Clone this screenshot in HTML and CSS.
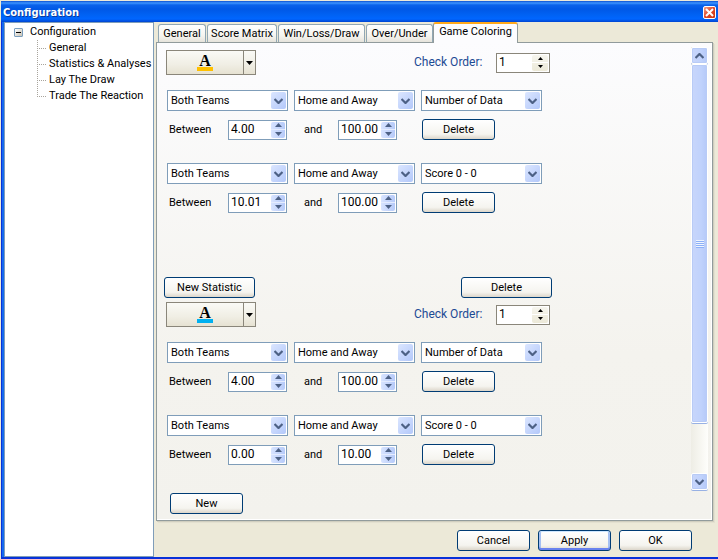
FILE: index.html
```html
<!DOCTYPE html>
<html lang="en">
<head>
<meta charset="utf-8">
<title>Configuration</title>
<link rel="stylesheet" href="styles.css">
</head>
<body>
<svg class="defs" aria-hidden="true">
  <symbol id="chev-down" viewBox="0 0 9 6"><path d="M0.5 1 L4.5 5 L8.5 1" fill="none" stroke="#4d6185" stroke-width="2.2"/></symbol>
  <symbol id="chev-up" viewBox="0 0 9 6"><path d="M0.5 5 L4.5 1 L8.5 5" fill="none" stroke="#4d6185" stroke-width="2.2"/></symbol>
  <symbol id="tri-up" viewBox="0 0 7 4"><path d="M0 4 L3.5 0 L7 4Z" fill="currentColor"/></symbol>
  <symbol id="tri-down" viewBox="0 0 7 4"><path d="M0 0 L3.5 4 L7 0Z" fill="currentColor"/></symbol>
</svg>
<div class="window">
  <header class="titlebar">
    <h1>Configuration</h1>
    <button class="close" aria-label="Close"><svg viewBox="0 0 9 9"><path d="M1 1 L8 8 M8 1 L1 8" stroke="#fff" stroke-width="2"/></svg></button>
  </header>
  <div class="body">
    <nav class="tree">
      <div class="root"><button class="toggle" aria-label="Collapse"></button><a href="#">Configuration</a></div>
      <ul>
        <li><a href="#">General</a></li>
        <li><a href="#">Statistics &amp; Analyses</a></li>
        <li><a href="#">Lay The Draw</a></li>
        <li><a href="#">Trade The Reaction</a></li>
      </ul>
    </nav>
    <main class="main">
      <div class="tabs" role="tablist">
        <button class="tab tab-general" role="tab">General</button>
        <button class="tab tab-matrix" role="tab">Score Matrix</button>
        <button class="tab tab-wld" role="tab">Win/Loss/Draw</button>
        <button class="tab tab-ou" role="tab">Over/Under</button>
        <button class="tab active" role="tab" aria-selected="true">Game Coloring</button>
      </div>
      <section class="panel">
        <div class="content">
          <div class="group">
            <div class="head">
              <div class="color amber"><button class="swatch" aria-label="Color"><b>A</b><i></i></button><button class="drop" aria-label="Choose color"><svg><use href="#tri-down"/></svg></button></div>
              <label class="order" for="o1">Check Order:</label>
              <span class="spin plain"><input id="o1" value="1"><span class="arrows"><button aria-label="Up"><svg><use href="#tri-up"/></svg></button><button aria-label="Down"><svg><use href="#tri-down"/></svg></button></span></span>
            </div>
            <div class="stat">
              <div class="combos">
                <span class="combo"><select aria-label="Team"><option>Both Teams</option></select><span><svg><use href="#chev-down"/></svg></span></span>
                <span class="combo"><select aria-label="Venue"><option>Home and Away</option></select><span><svg><use href="#chev-down"/></svg></span></span>
                <span class="combo"><select aria-label="Statistic"><option>Number of Data</option></select><span><svg><use href="#chev-down"/></svg></span></span>
              </div>
              <div class="range">
                <label for="a1">Between</label>
                <span class="spin"><input id="a1" value="4.00"><span class="arrows"><button aria-label="Up"><svg><use href="#tri-up"/></svg></button><button aria-label="Down"><svg><use href="#tri-down"/></svg></button></span></span>
                <label class="and" for="b1">and</label>
                <span class="spin"><input id="b1" value="100.00"><span class="arrows"><button aria-label="Up"><svg><use href="#tri-up"/></svg></button><button aria-label="Down"><svg><use href="#tri-down"/></svg></button></span></span>
                <button class="btn">Delete</button>
              </div>
            </div>
            <div class="stat">
              <div class="combos">
                <span class="combo"><select aria-label="Team"><option>Both Teams</option></select><span><svg><use href="#chev-down"/></svg></span></span>
                <span class="combo"><select aria-label="Venue"><option>Home and Away</option></select><span><svg><use href="#chev-down"/></svg></span></span>
                <span class="combo"><select aria-label="Statistic"><option>Score 0 - 0</option></select><span><svg><use href="#chev-down"/></svg></span></span>
              </div>
              <div class="range">
                <label for="a2">Between</label>
                <span class="spin"><input id="a2" value="10.01"><span class="arrows"><button aria-label="Up"><svg><use href="#tri-up"/></svg></button><button aria-label="Down"><svg><use href="#tri-down"/></svg></button></span></span>
                <label class="and" for="b2">and</label>
                <span class="spin"><input id="b2" value="100.00"><span class="arrows"><button aria-label="Up"><svg><use href="#tri-up"/></svg></button><button aria-label="Down"><svg><use href="#tri-down"/></svg></button></span></span>
                <button class="btn">Delete</button>
              </div>
            </div>
            <div class="group-actions"><button class="btn wide">New Statistic</button><button class="btn wide">Delete</button></div>
          </div>
          <div class="group">
            <div class="head">
              <div class="color sky"><button class="swatch" aria-label="Color"><b>A</b><i></i></button><button class="drop" aria-label="Choose color"><svg><use href="#tri-down"/></svg></button></div>
              <label class="order" for="o2">Check Order:</label>
              <span class="spin plain"><input id="o2" value="1"><span class="arrows"><button aria-label="Up"><svg><use href="#tri-up"/></svg></button><button aria-label="Down"><svg><use href="#tri-down"/></svg></button></span></span>
            </div>
            <div class="stat">
              <div class="combos">
                <span class="combo"><select aria-label="Team"><option>Both Teams</option></select><span><svg><use href="#chev-down"/></svg></span></span>
                <span class="combo"><select aria-label="Venue"><option>Home and Away</option></select><span><svg><use href="#chev-down"/></svg></span></span>
                <span class="combo"><select aria-label="Statistic"><option>Number of Data</option></select><span><svg><use href="#chev-down"/></svg></span></span>
              </div>
              <div class="range">
                <label for="a3">Between</label>
                <span class="spin"><input id="a3" value="4.00"><span class="arrows"><button aria-label="Up"><svg><use href="#tri-up"/></svg></button><button aria-label="Down"><svg><use href="#tri-down"/></svg></button></span></span>
                <label class="and" for="b3">and</label>
                <span class="spin"><input id="b3" value="100.00"><span class="arrows"><button aria-label="Up"><svg><use href="#tri-up"/></svg></button><button aria-label="Down"><svg><use href="#tri-down"/></svg></button></span></span>
                <button class="btn">Delete</button>
              </div>
            </div>
            <div class="stat">
              <div class="combos">
                <span class="combo"><select aria-label="Team"><option>Both Teams</option></select><span><svg><use href="#chev-down"/></svg></span></span>
                <span class="combo"><select aria-label="Venue"><option>Home and Away</option></select><span><svg><use href="#chev-down"/></svg></span></span>
                <span class="combo"><select aria-label="Statistic"><option>Score 0 - 0</option></select><span><svg><use href="#chev-down"/></svg></span></span>
              </div>
              <div class="range">
                <label for="a4">Between</label>
                <span class="spin"><input id="a4" value="0.00"><span class="arrows"><button aria-label="Up"><svg><use href="#tri-up"/></svg></button><button aria-label="Down"><svg><use href="#tri-down"/></svg></button></span></span>
                <label class="and" for="b4">and</label>
                <span class="spin"><input id="b4" value="10.00"><span class="arrows"><button aria-label="Up"><svg><use href="#tri-up"/></svg></button><button aria-label="Down"><svg><use href="#tri-down"/></svg></button></span></span>
                <button class="btn">Delete</button>
              </div>
            </div>
          </div>
          <button class="btn new">New</button>
        </div>
        <div class="scrollbar">
          <button aria-label="Scroll up"><svg><use href="#chev-up"/></svg></button>
          <div class="thumb"><i></i></div>
          <div class="track"></div>
          <button aria-label="Scroll down"><svg><use href="#chev-down"/></svg></button>
        </div>
      </section>
      <footer class="footer">
        <button class="btn">Cancel</button>
        <button class="btn default">Apply</button>
        <button class="btn">OK</button>
      </footer>
    </main>
  </div>
</div>
</body>
</html>
```

FILE: styles.css
```css
* { box-sizing: border-box; }
body {
  margin: 0;
  background: #ece9d8;
  color: #000;
  font: 11px/16px Roboto, "Liberation Sans", sans-serif;
}
button, input, select { font: inherit; color: inherit; margin: 0; padding: 0; }
button { border: 0; background: none; }
a { color: inherit; text-decoration: none; }
svg { display: block; }
.defs { display: none; }

.window {
  display: flex;
  flex-direction: column;
  min-height: 100vh;
  padding: 1px 0 0 1px;
}
.titlebar {
  display: flex;
  align-items: center;
  justify-content: space-between;
  height: 21px;
  padding: 1px 2px 0 2px;
  background: linear-gradient(#0a4fd0 0, #3d95ff 2px, #0a62ea 4px, #0058e6 8px, #0062f4 14px, #0066ff 18px, #0044d0 21px);
}
.titlebar h1 {
  margin: 0;
  padding-top: 2px;
  color: #fff;
  font: bold 11px/18px "DejaVu Sans Condensed", "DejaVu Sans", sans-serif;
  text-shadow: 1px 1px #0a3a9c;
}
.close {
  display: grid;
  place-items: center;
  width: 13px;
  height: 13px;
  border: 1px solid #fff;
  border-radius: 2px;
  background: linear-gradient(135deg, #f0a088, #e0492a 50%, #c53512);
}
.close svg { width: 9px; height: 9px; }

.body {
  flex: 1;
  display: flex;
  border: solid #0831d9;
  border-width: 0 0 2px 1px;
  box-shadow: inset 2px 0 #166aee;
  padding-left: 2px;
}
.tree {
  flex: none;
  width: 150px;
  padding: 1px 0 0 9px;
  background: #fff;
  border: 1px solid #7f9db9;
}
.root { display: flex; align-items: center; gap: 7px; }
.toggle {
  width: 9px;
  height: 9px;
  border: 1px solid #7b9ebd;
  border-radius: 1px;
  background:
    linear-gradient(#000, #000) center / 5px 1px no-repeat,
    linear-gradient(135deg, #fff, #c8c2b4);
}
.tree ul { list-style: none; margin: 0 0 0 23px; padding: 0; }
.tree li {
  padding-left: 12px;
  white-space: nowrap;
  background:
    repeating-linear-gradient(#a8a49c 0 1px, transparent 1px 2px) 0 0 / 1px 100% no-repeat,
    repeating-linear-gradient(90deg, #a8a49c 0 1px, transparent 1px 2px) 0 8px / 10px 1px no-repeat;
}
.tree li:last-child {
  background-size: 1px 8px, 10px 1px;
}

.main {
  flex: 1;
  display: flex;
  flex-direction: column;
  min-width: 0;
  padding: 0 5px 0 2px;
}
.tabs { display: flex; align-items: flex-end; height: 20px; padding-left: 2px; gap: 1px; }
.tab {
  height: 18px;
  border: 1px solid #91a7b4;
  border-bottom: 0;
  border-radius: 3px 3px 0 0;
  background: linear-gradient(#fff, #f6f5f0 60%, #e6e4dc);
  white-space: nowrap;
}
.tab-general { width: 48px; }
.tab-matrix { width: 70px; }
.tab-wld { width: 87px; }
.tab-ou { width: 67px; }
.tab.active {
  width: 85px;
  height: 21px;
  margin: 0 0 -1px -1px;
  padding-bottom: 3px;
  border: 1px solid #919b9c;
  border-top: 2px solid #ffa91c;
  border-bottom: 0;
  background: #fcfcfe;
  z-index: 1;
}
.panel {
  flex: 1;
  display: flex;
  justify-content: space-between;
  padding: 4px 4px 5px 7px;
  border: 1px solid #919b9c;
  background: linear-gradient(#fcfcfe, #f4f3ee 65%, #f3f2ed);
  box-shadow: inset -1px -1px #fff, 1px 1px #d0cebf, 2px 2px #e3e0d0;
}
.content { padding-top: 3px; }
.head { display: flex; align-items: center; height: 25px; padding-left: 2px; }
.color {
  display: flex;
  width: 90px;
  height: 25px;
  border: 1px solid #8a867a;
  background: linear-gradient(#fafaf6, #f0eee4 60%, #e6e2d2);
}
.swatch { flex: 1; display: grid; justify-items: center; align-content: center; }
.swatch b { font: bold 16px/13px "Liberation Serif", serif; }
.swatch i { width: 16px; height: 4px; }
.amber i { background: #ffc000; }
.sky i { background: #00b0f0; }
.drop { display: grid; place-items: center; width: 12px; border-left: 1px solid #8a867a; }
.drop svg { width: 7px; height: 4px; }
.order {
  width: 82px;
  margin-left: 158px;
  padding-bottom: 2px;
  color: #1c4a94;
  font-size: 12px;
}

.stat { padding: 15px 0 8px 3px; }
.stat + .stat { padding-bottom: 0; }
.combos { display: flex; gap: 6px; }
.combo { position: relative; width: 121px; height: 21px; }
.combo select {
  appearance: none;
  width: 100%;
  height: 100%;
  padding: 0 20px 0 3px;
  border: 1px solid #7f9db9;
  border-radius: 0;
  background: #fff;
}
.combo span {
  position: absolute;
  inset: 2px 2px 2px auto;
  display: grid;
  place-items: center;
  width: 15px;
  border-radius: 2px;
  background: linear-gradient(135deg, #dbe6ff, #b3c8fa);
  pointer-events: none;
}
.combo svg { width: 9px; height: 6px; }
.range { display: flex; align-items: center; margin-top: 8px; padding-left: 2px; }
.range label { width: 59px; }
.range .and { width: 34px; margin-left: 17px; }
.range .btn { margin-left: 25px; }

.spin {
  display: flex;
  width: 59px;
  height: 20px;
  padding: 1px;
  border: 1px solid #7f9db9;
  background: #fff;
}
.spin input {
  flex: 1;
  min-width: 0;
  height: 14px;
  border: 0;
  padding-left: 1px;
  background: none;
  font-size: 12px;
}
.arrows {
  display: flex;
  flex-direction: column;
  width: 14px;
  border-radius: 2px;
  color: #4d6185;
  background: linear-gradient(90deg, #d8e4ff, #b6caf9);
}
.arrows button { flex: 1; display: grid; place-items: center; }
.arrows button + button { border-top: 1px solid #e4ecff; }
.arrows svg { width: 7px; height: 4px; }
.spin.plain { width: 54px; border-color: #8a867a; }
.plain .arrows { width: 16px; color: #000; background: linear-gradient(#f6f5ee, #ece9d8); }
.plain .arrows button + button { border-color: #fff; }
.plain svg { width: 5px; height: 3px; }

.btn {
  width: 73px;
  height: 21px;
  border: 1px solid #003c74;
  border-radius: 3px;
  background: linear-gradient(#fff, #f5f4ef 75%, #dcd6ca);
}
.btn.wide { width: 91px; }
.btn.default { box-shadow: inset 0 1px #cee7ff, inset 0 -2px #6982ee, inset 2px 0 #a5c0f2, inset -2px 0 #a5c0f2; }
.group-actions { display: flex; gap: 206px; margin: 64px 0 4px; }
.new { display: block; margin: 28px 0 0 6px; }

.scrollbar { display: flex; flex-direction: column; width: 17px; margin-bottom: 25px; background: linear-gradient(90deg, #eeede5, #fefefb); }
.scrollbar button, .thumb {
  display: grid;
  place-items: center;
  border: 1px solid #fff;
  border-radius: 2px;
  background: linear-gradient(90deg, #c8d6fb, #c0d2fc 60%, #b5c9f8);
  box-shadow: inset 0 0 0 1px #b8cbf6, 0 1px #98b1e4;
}
.scrollbar button { height: 17px; }
.scrollbar svg { width: 9px; height: 6px; }
.thumb { flex: 359; }
.track { flex: 50; }
.thumb i { width: 8px; height: 8px; background: repeating-linear-gradient(#eef4fe 0 1px, #8cb0f8 1px 2px); }

.footer { display: flex; justify-content: flex-end; gap: 8px; padding: 9px 21px 6px 0; }
```
